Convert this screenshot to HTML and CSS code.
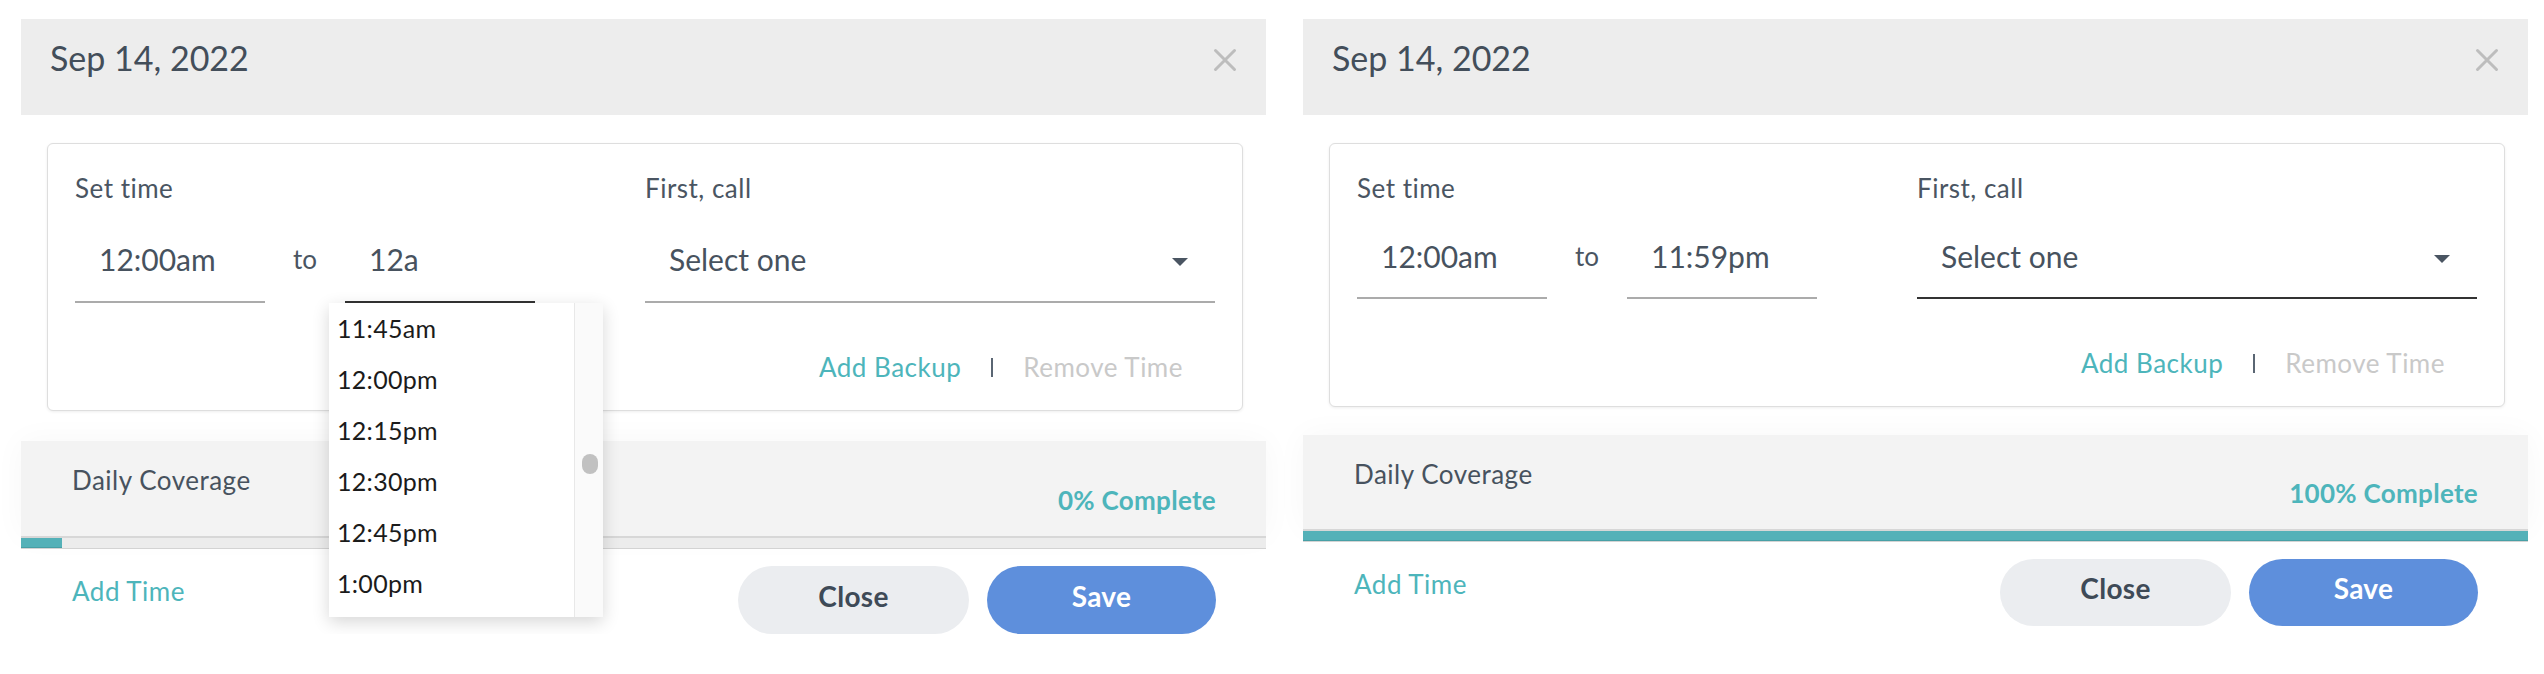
FILE: index.html
```html
<!DOCTYPE html>
<html lang="en">
<head>
<meta charset="utf-8">
<title>Daily coverage</title>
<link rel="stylesheet" href="styles.css">
</head>
<body>
<div class="page">
  <section class="panel panel--a">
    <header class="hdr">
      <h1 class="hdr-title">Sep 14, 2022</h1>
      <button class="hdr-close" aria-label="Close"><svg width="24" height="24" viewBox="0 0 24 24"><path d="M2.5 2.5L21.5 21.5M21.5 2.5L2.5 21.5" stroke="#bdbdbd" stroke-width="3" stroke-linecap="round"/></svg></button>
    </header>
    <div class="content">
      <div class="card">
        <div class="grid">
          <div class="col">
            <div class="label">Set time</div>
            <div class="time-row">
              <div class="field">12:00am</div>
              <span class="to">to</span>
              <div class="field field--active">12a
                <div class="dd">
                  <ul class="dd-list">
                    <li>11:45am</li>
                    <li>12:00pm</li>
                    <li>12:15pm</li>
                    <li>12:30pm</li>
                    <li>12:45pm</li>
                    <li>1:00pm</li>
                  </ul>
                  <div class="dd-track"><div class="dd-thumb"></div></div>
                </div>
              </div>
            </div>
          </div>
          <div class="col">
            <div class="label">First, call</div>
            <div class="select"><span>Select one</span><span class="caret"></span></div>
          </div>
        </div>
        <div class="actions">
          <span class="link-teal">Add Backup</span>
          <span class="sep"></span>
          <span class="link-muted">Remove Time</span>
        </div>
      </div>
    </div>
    <div class="band">
      <span class="band-label">Daily Coverage</span>
      <span class="band-pct">0% Complete</span>
    </div>
    <div class="progress"><div class="progress-fill" style="width:41px"></div></div>
    <div class="footer">
      <span class="add-time">Add Time</span>
      <div class="btns">
        <button class="btn btn--close">Close</button>
        <button class="btn btn--save">Save</button>
      </div>
    </div>
  </section>

  <section class="panel panel--b">
    <header class="hdr">
      <h1 class="hdr-title">Sep 14, 2022</h1>
      <button class="hdr-close" aria-label="Close"><svg width="24" height="24" viewBox="0 0 24 24"><path d="M2.5 2.5L21.5 21.5M21.5 2.5L2.5 21.5" stroke="#bdbdbd" stroke-width="3" stroke-linecap="round"/></svg></button>
    </header>
    <div class="content">
      <div class="card">
        <div class="grid">
          <div class="col">
            <div class="label">Set time</div>
            <div class="time-row">
              <div class="field">12:00am</div>
              <span class="to">to</span>
              <div class="field">11:59pm</div>
            </div>
          </div>
          <div class="col">
            <div class="label">First, call</div>
            <div class="select select--active"><span>Select one</span><span class="caret"></span></div>
          </div>
        </div>
        <div class="actions">
          <span class="link-teal">Add Backup</span>
          <span class="sep"></span>
          <span class="link-muted">Remove Time</span>
        </div>
      </div>
    </div>
    <div class="band">
      <span class="band-label">Daily Coverage</span>
      <span class="band-pct">100% Complete</span>
    </div>
    <div class="progress"><div class="progress-fill" style="width:100%"></div></div>
    <div class="footer">
      <span class="add-time">Add Time</span>
      <div class="btns">
        <button class="btn btn--close">Close</button>
        <button class="btn btn--save">Save</button>
      </div>
    </div>
  </section>
</div>
</body>
</html>
```

FILE: styles.css
```css
* { box-sizing: border-box; margin: 0; padding: 0; }

body {
  background: #fff;
  font-family: Lato, "Liberation Sans", Arial, sans-serif;
  color: #47525e;
}

.page {
  display: flex;
  align-items: flex-start;
  gap: 37px;
  padding: 19px 0 0 21px;
}

.panel { position: relative; flex: none; }
.panel--a { width: 1245px; }
.panel--b { width: 1225px; }

/* header */
.hdr {
  display: flex;
  justify-content: space-between;
  align-items: flex-start;
  height: 96px;
  padding: 19px 29px 0 29px;
  background: #ededed;
}
.hdr-title {
  font-size: 34px;
  font-weight: 400;
  line-height: 1.2;
  color: #434e5a;
}
.hdr-close {
  display: block;
  margin-top: 10px;
  width: 24px;
  height: 24px;
  border: 0;
  background: none;
}
.hdr-close svg { display: block; }

/* card */
.content { padding: 28px 23px 0 26px; }

.card {
  background: #fff;
  border: 1px solid #dedede;
  border-radius: 6px;
  box-shadow: 0 1px 3px rgba(0, 0, 0, 0.07);
  padding: 29px 27px 27px 27px;
}

.grid {
  display: grid;
  grid-template-columns: 1fr 1fr;
}

.label {
  font-size: 26px;
  line-height: 1.2;
  letter-spacing: 0.5px;
  color: #4a5562;
}

.time-row {
  display: flex;
  align-items: flex-start;
  gap: 28px;
  margin-top: 37px;
}

.field {
  position: relative;
  width: 190px;
  padding: 0 0 24px 24px;
  font-size: 30px;
  line-height: 36px;
  color: #47525e;
  border-bottom: 2px solid #ababab;
}
.field--active { border-bottom-color: #333; }

.to {
  font-size: 26px;
  line-height: 1.2;
  padding-top: 3px;
  color: #4a5562;
}

.select {
  display: flex;
  justify-content: space-between;
  align-items: center;
  margin-top: 37px;
  padding: 0 27px 24px 24px;
  font-size: 30px;
  line-height: 36px;
  color: #47525e;
  border-bottom: 2px solid #ababab;
}
.select--active { border-bottom-color: #333; }

.caret {
  width: 0;
  height: 0;
  margin-top: 5px;
  border-left: 8px solid transparent;
  border-right: 8px solid transparent;
  border-top: 8px solid #4a5562;
}

/* dropdown */
.dd {
  position: absolute;
  top: calc(100% + 2px);
  left: -16px;
  z-index: 10;
  width: 274px;
  height: 314px;
  overflow: hidden;
  background: #fff;
  box-shadow: 0 5px 16px rgba(0, 0, 0, 0.16);
}
.dd-list { list-style: none; }
.dd-list li {
  font-size: 25px;
  line-height: 51px;
  padding-left: 8px;
  color: #1b1b1b;
  letter-spacing: 0.3px;
}
.dd-track {
  position: absolute;
  top: 0;
  right: 0;
  bottom: 0;
  width: 29px;
  background: #fafafa;
  border-left: 1px solid #e8e8e8;
}
.dd-thumb {
  position: absolute;
  top: 151px;
  left: 7px;
  width: 16px;
  height: 20px;
  border-radius: 8px;
  background: #c1c1c1;
}

/* actions */
.actions {
  display: flex;
  justify-content: flex-end;
  align-items: baseline;
  gap: 30px;
  margin-top: 49px;
  padding-right: 32px;
  font-size: 26px;
  line-height: 1.2;
  letter-spacing: 0.5px;
}
.link-teal { color: #4db5bb; }
.link-muted { color: #c9c9c9; }
.sep {
  display: inline-block;
  width: 2px;
  height: 19px;
  background: #5a6673;
}

/* coverage band */
.band {
  display: flex;
  justify-content: space-between;
  align-items: flex-start;
  height: 95px;
  margin-top: 30px;
  padding: 24px 50px 20px 51px;
  background: #f3f3f3;
  box-shadow: 0 0 30px rgba(0, 0, 0, 0.035);
}
.band-label {
  font-size: 26px;
  line-height: 1.2;
  letter-spacing: 0.5px;
  color: #47525e;
}
.band-pct {
  align-self: flex-end;
  font-size: 26px;
  font-weight: 700;
  line-height: 1.2;
  letter-spacing: 0.3px;
  color: #4db5bb;
}

.progress {
  height: 13px;
  background: #ececec;
  border-top: 2px solid #d7d7d7;
  border-bottom: 1px solid #d3d3d3;
}
.progress-fill {
  height: 100%;
  background: #54b1b8;
  border-bottom: 1px solid #479fa5;
}

/* footer */
.footer {
  display: flex;
  align-items: flex-start;
  padding: 17px 50px 0 51px;
}
.add-time {
  margin-top: 10px;
  font-size: 26px;
  line-height: 1.2;
  letter-spacing: 0.5px;
  color: #4db5bb;
}
.btns {
  display: flex;
  gap: 18px;
  margin-left: auto;
}
.btn {
  width: 231px;
  height: 68px;
  padding-bottom: 8px;
  border: 0;
  border-radius: 34px;
  font-family: inherit;
  font-size: 28px;
  font-weight: 700;
  line-height: 1.2;
  letter-spacing: 0.3px;
}
.btn--close { background: #ebedf0; color: #3e4a57; }
.btn--save { width: 229px; background: #5e8fdc; color: #fff; }

/* second panel is slightly tighter vertically */
.panel--b .time-row,
.panel--b .select { margin-top: 34px; }
.panel--b .field,
.panel--b .select { padding-bottom: 23px; }
.panel--b .band { margin-top: 28px; height: 94px; }
.panel--b .btn { height: 67px; }
```
